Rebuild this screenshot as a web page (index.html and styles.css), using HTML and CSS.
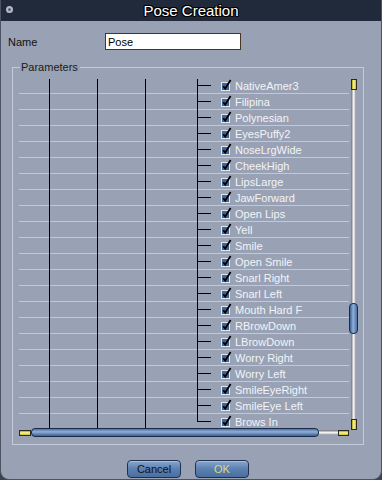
FILE: index.html
```html
<!DOCTYPE html>
<html lang="en">
<head>
  <meta charset="UTF-8" />
  <title>Pose Creation</title>
  <link rel="stylesheet" href="styles.css">
</head>
<body>
  <div class="window">
    <div class="titlebar">
      <span class="close"></span>
      <span class="title">Pose Creation</span>
    </div>

    <div class="content">
      <div class="name-row">
        <label class="name-label" for="poseName">Name</label>
        <input id="poseName" class="name-input" type="text" value="Pose" />
      </div>

      <div class="group">
        <span class="legend">Parameters</span>
        <div class="tree">
          <div class="list" id="list"></div>

          <div class="vscroll">
            <span class="cap"></span>
            <span class="track track-top"></span>
            <span class="thumb"></span>
            <span class="track track-bottom"></span>
            <span class="cap"></span>
          </div>

          <div class="hscroll">
            <span class="cap"></span>
            <span class="thumb"></span>
            <span class="track"></span>
            <span class="cap"></span>
          </div>
        </div>
      </div>

      <div class="buttons">
        <button class="btn">Cancel</button>
        <button class="btn btn-ok">OK</button>
      </div>
    </div>
  </div>

  <script>
    const params = [
      'NativeAmer3', 'Filipina', 'Polynesian', 'EyesPuffy2', 'NoseLrgWide',
      'CheekHigh', 'LipsLarge', 'JawForward', 'Open Lips', 'Yell', 'Smile',
      'Open Smile', 'Snarl Right', 'Snarl Left', 'Mouth Hard F', 'RBrowDown',
      'LBrowDown', 'Worry Right', 'Worry Left', 'SmileEyeRight', 'SmileEye Left',
      'Brows In'
    ];

    const check = '<svg class="check" width="12" height="12" viewBox="0 0 12 12">' +
      '<rect x="1.5" y="3.5" width="8" height="8" fill="#3d679c" stroke="#e4e8ee"/>' +
      '<path d="M3.3 7.2 L5.2 9.6 L10.6 1" fill="none" stroke="#000" stroke-width="1.8"/>' +
      '</svg>';

    const list = document.getElementById('list');
    params.forEach(function(name) {
      const row = document.createElement('div');
      row.className = 'row';
      row.innerHTML = '<span class="branch"></span>' + check +
        '<span class="label">' + name + '</span>';
      list.appendChild(row);
    });
  </script>
</body>
</html>
```

FILE: styles.css
```css
body {
  margin: 0;
  background: #3c4250;
  font-family: 'Liberation Sans', Arial, sans-serif;
}
.window {
  width: 382px;
  height: 480px;
  box-sizing: border-box;
  background: #99a2b4;
  border: 1px solid #4c5464;
  border-top: none;
  border-radius: 0 0 9px 9px;
  overflow: hidden;
}
.titlebar {
  height: 21px;
  background: #212a3b;
  display: flex;
  align-items: center;
  justify-content: center;
  position: relative;
}
.close {
  position: absolute;
  left: 5px;
  top: 6px;
  width: 3px;
  height: 3px;
  border: 2px solid #b4bac6;
  border-radius: 50%;
  background: #5a6070;
}
.title {
  color: #fff;
  font-size: 15px;
  text-shadow: 1px 1px 0 #000, -1px -1px 0 #000, 1px -1px 0 #000, -1px 1px 0 #000;
}
.content {
  padding: 12px 0 0 0;
}
.name-row {
  display: flex;
  align-items: center;
  padding-left: 7px;
}
.name-label {
  width: 97px;
  font-size: 11px;
  color: #111;
}
.name-input {
  width: 136px;
  height: 17px;
  box-sizing: border-box;
  margin: 0;
  padding: 0 0 0 2px;
  border: 1px solid #4a3422;
  background: #fff;
  font-family: 'Liberation Sans', Arial, sans-serif;
  font-size: 11px;
  color: #000;
  outline: none;
}

/* Parameters group */
.group {
  position: relative;
  margin: 17px 0 0 11px;
  width: 352px;
  height: 378px;
  box-sizing: border-box;
  border: 1px solid #c4cbd7;
  padding: 10px 0 0 6px;
}
.legend {
  position: absolute;
  top: -8px;
  left: 7px;
  padding: 0 2px 0 1px;
  background: #99a2b4;
  font-size: 11px;
  line-height: 14px;
  color: #1a1a1a;
}
.tree {
  display: grid;
  grid-template-columns: 330px 9px;
  grid-template-rows: 350px 9px;
}
.list {
  position: relative;
  overflow: hidden;
}
.list::after {
  content: '';
  position: absolute;
  inset: 0;
  pointer-events: none;
  background:
    linear-gradient(#000, #000) 30px 1px / 1px 100% no-repeat,
    linear-gradient(#000, #000) 78px 1px / 1px 100% no-repeat,
    linear-gradient(#000, #000) 126px 1px / 1px 100% no-repeat,
    linear-gradient(#000, #000) 178px 1px / 1px 343px no-repeat;
}
.row {
  height: 15px;
  border-bottom: 1px solid #c2c9d5;
  display: flex;
  align-items: center;
}
.row:first-child {
  height: 15px;
}
.branch {
  margin-left: 179px;
  width: 13px;
  height: 1px;
  background: #000;
}
.check {
  margin-left: 9px;
  margin-top: -2px;
  flex-shrink: 0;
}
.label {
  margin-left: 3px;
  font-size: 11px;
  color: #f2f4f8;
  white-space: nowrap;
}

/* scrollbars */
.vscroll {
  grid-column: 2;
  grid-row: 1;
  height: 351px;
  margin-top: 1px;
  display: flex;
  flex-direction: column;
  align-items: center;
}
.vscroll .cap {
  width: 6px;
  height: 11px;
  box-sizing: border-box;
  border: 1px solid #2a2a1e;
  background: linear-gradient(to right, #a89e10, #fff9a0 45%, #c8bc20);
}
.vscroll .track {
  width: 5px;
  background: linear-gradient(to right, #6a6e76, #fff 55%, #8a8e96);
}
.vscroll .track-top {
  height: 213px;
}
.vscroll .track-bottom {
  flex: 1;
}
.vscroll .thumb {
  width: 9px;
  height: 31px;
  box-sizing: border-box;
  border: 1px solid #1c2c48;
  border-radius: 4px;
  background: linear-gradient(to right, #3c5f92, #8fb0d8 45%, #4a70a4);
}
.hscroll {
  grid-column: 1;
  grid-row: 2;
  display: flex;
  align-items: center;
}
.hscroll .cap {
  width: 12px;
  height: 6px;
  box-sizing: border-box;
  border: 1px solid #2a2a1e;
  background: linear-gradient(#a89e10, #fff9a0 45%, #c8bc20);
}
.hscroll .cap:last-child {
  width: 11px;
}
.hscroll .thumb {
  width: 288px;
  height: 9px;
  box-sizing: border-box;
  border: 1px solid #1c2c48;
  border-radius: 4px;
  background: linear-gradient(#4a70a4, #8fb0d8 40%, #3c5f92);
}
.hscroll .track {
  flex: 1;
  height: 5px;
  background: linear-gradient(#6a6e76, #fff 55%, #8a8e96);
}

/* buttons */
.buttons {
  display: flex;
  justify-content: center;
  gap: 14px;
  padding: 15px 6px 0 0;
}
.btn {
  width: 54px;
  height: 18px;
  padding: 0;
  border: 1px solid #1e304e;
  border-radius: 4px;
  background: linear-gradient(#87a6cc, #5c80b0 50%, #4a6e9e);
  box-shadow: inset 0 1px 0 #a8c0de;
  font-family: 'Liberation Sans', Arial, sans-serif;
  font-size: 11px;
  color: #111;
}
.btn-ok {
  color: #d8dc7c;
}
```
